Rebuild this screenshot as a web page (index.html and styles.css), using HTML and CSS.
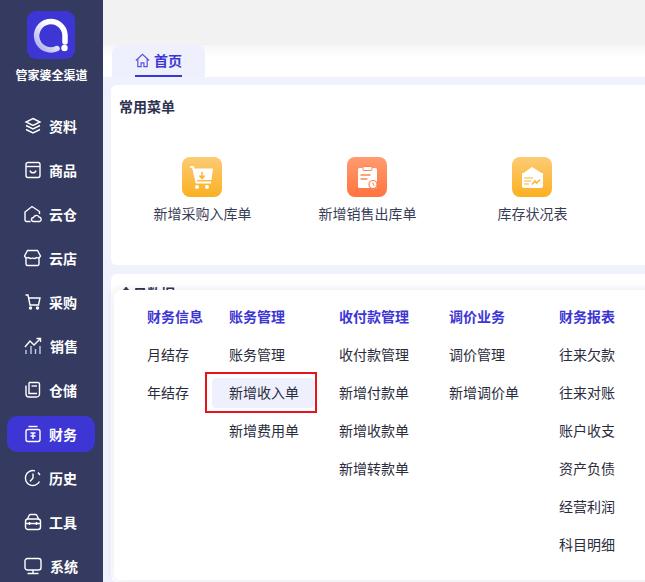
FILE: index.html
```html
<!DOCTYPE html>
<html lang="zh">
<head>
    <meta charset="UTF-8">
    <title>管家婆全渠道</title>
    <link rel="stylesheet" href="styles.css">
</head>
<body>
    <div class="app">
        <!-- 左侧导航 -->
        <aside class="sidebar">
            <div class="logo">
                <svg viewBox="0 0 48 48" width="48" height="48">
                    <defs>
                        <linearGradient id="ring" x1="1" y1="0" x2="0" y2="1">
                            <stop offset="0.35" stop-color="#fff"/>
                            <stop offset="1" stop-color="#aaa8ea"/>
                        </linearGradient>
                    </defs>
                    <rect width="48" height="48" rx="9" fill="#3d36d4"/>
                    <path d="M38 31V24A14.200 14.200 0 1 0 30 37.500" fill="none" stroke="url(#ring)" stroke-width="5.500" stroke-linecap="round"/>
                    <circle cx="37.500" cy="37" r="3.200" fill="#fff"/>
                </svg>
            </div>
            <div class="brand">管家婆全渠道</div>
            <nav class="nav">
                <a class="nav-item">
                    <svg viewBox="0 0 18 18"><path d="M9 1.500 16 5 9 8.500 2 5Z"/><path d="M2 8.500 9 12l7-3.500"/><path d="M2 12.500 9 16l7-3.500"/></svg>
                    <span>资料</span>
                </a>
                <a class="nav-item">
                    <svg viewBox="0 0 18 18"><rect x="2" y="1.500" width="14" height="15" rx="2"/><path d="M2 5.500h14"/><path d="M6 9.500c.6 3 5.400 3 6 0"/></svg>
                    <span>商品</span>
                </a>
                <a class="nav-item mid">
                    <svg viewBox="0 0 18 18"><path d="M7 16.500H3a1.500 1.500 0 0 1-1.500-1.500V7L8.500 1.500 16 6.500v2.500"/><path d="M10 16.500a2 2 0 0 1 0-4 3 3 0 0 1 5.500-.5 2.300 2.300 0 0 1 .5 4.500Z"/></svg>
                    <span>云仓</span>
                </a>
                <a class="nav-item mid">
                    <svg viewBox="0 0 18 18"><path d="M4 1.500h10l3 5.500a2.700 2.700 0 0 1-4 1.500 3.500 3.500 0 0 1-4 .5 3.500 3.500 0 0 1-4-.5 2.700 2.700 0 0 1-4-1.500Z"/><path d="M2.500 9v6a1.500 1.500 0 0 0 1.500 1.500h10a1.500 1.500 0 0 0 1.500-1.500V9"/></svg>
                    <span>云店</span>
                </a>
                <a class="nav-item">
                    <svg viewBox="0 0 18 18"><path d="M1.500 2h2.500l2 10h8.500l1.500-7H4.500"/><circle cx="6.500" cy="15" r="1"/><circle cx="13.500" cy="15" r="1"/></svg>
                    <span>采购</span>
                </a>
                <a class="nav-item wide">
                    <svg viewBox="0 0 18 18"><path d="M1 10 6 4l4 4 6-6"/><path d="M12.500 1.500H16.500V5"/><path class="bar" d="M2 13v4M7 9v8M11.500 12v5M16 9v8"/></svg>
                    <span>销售</span>
                </a>
                <a class="nav-item">
                    <svg viewBox="0 0 18 18"><path d="M5 1.500h9a1.500 1.500 0 0 1 1.500 1.500v10a3 3 0 0 1-3 3H5a3 3 0 0 1-3-3V4.500"/><path d="M5 1.500v11h8"/><path d="M7.500 5h5.500"/></svg>
                    <span>仓储</span>
                </a>
                <a class="nav-item active">
                    <svg viewBox="0 0 18 18"><rect x="2" y="4.500" width="14" height="12" rx="2"/><path d="M4.500 1.500h9"/><path d="M6.500 8h5M6.500 11h5M9 8v6"/></svg>
                    <span>财务</span>
                </a>
                <a class="nav-item">
                    <svg viewBox="0 0 18 18"><path d="M15.500 12.500A7.500 7.500 0 1 1 11 1.800"/><path d="M9 4.500V9l-3 3.500"/><path d="M14 3.500l2 2.500"/></svg>
                    <span>历史</span>
                </a>
                <a class="nav-item">
                    <svg viewBox="0 0 18 18"><rect x="1.500" y="6" width="15" height="10.500" rx="2.500"/><path d="M3.500 6 5 2.500a1.500 1.500 0 0 1 1.400-1h5.200a1.500 1.500 0 0 1 1.400 1L14.500 6"/><path d="M1.500 10.500h15M5.500 9v3M12.500 9v3"/></svg>
                    <span>工具</span>
                </a>
                <a class="nav-item wide">
                    <svg viewBox="0 0 18 18"><rect x="1" y="1.500" width="16" height="11.500" rx="2.500"/><path d="M9 13v3M3.500 16.500h11"/></svg>
                    <span>系统</span>
                </a>
            </nav>
        </aside>

        <main class="main">
            <div class="topbar"></div>
            <div class="tabs">
                <div class="tab">
                    <div class="tab-inner">
                        <svg viewBox="0 0 16 16" width="15" height="15"><path d="M1 8 8 1.500 15 8"/><path d="M3 6.500V14.500H6.500V10.500H9.500V14.500H13V6.500"/></svg>
                        <span>首页</span>
                    </div>
                </div>
            </div>

            <div class="content">
                <section class="card card-menu">
                    <h3>常用菜单</h3>
                    <div class="shortcuts">
                        <div class="shortcut">
                            <div class="shortcut-icon yellow">
                                <svg viewBox="0 0 40 40"><path d="M8 10h3l3.500 15.500H29" fill="none" stroke="#fff" stroke-width="2"/><path d="M11.500 11.500H31l-1.500 11.500H14Z" fill="#fff"/><path d="M20 15v6M17.500 18.500l2.500 3 2.500-3" fill="none" stroke="#fbb32e" stroke-width="1.500"/><circle cx="15" cy="30" r="2" fill="#fff"/><circle cx="25" cy="30" r="2" fill="#fff"/></svg>
                            </div>
                            <span>新增采购入库单</span>
                        </div>
                        <div class="shortcut">
                            <div class="shortcut-icon orange">
                                <svg viewBox="0 0 40 40"><path d="M12.500 11h16a1.500 1.500 0 0 1 1.500 1.500V29.500a1.500 1.500 0 0 1-1.500 1.500h-16a1.500 1.500 0 0 1-1.500-1.500v-17A1.500 1.500 0 0 1 12.500 11Z" fill="#fff"/><rect x="16" y="9.500" width="9" height="4" rx="1" fill="#fff" stroke="#ff8250"/><path d="M13.500 18h10M13.500 22h7" stroke="#ff8250" stroke-width="1.600"/><circle cx="26" cy="27.500" r="4" fill="#fff" stroke="#ff7f4d" stroke-width="1.200"/><path d="M26 25.500v2l1.500 1" stroke="#ff7f4d" fill="none"/></svg>
                            </div>
                            <span>新增销售出库单</span>
                        </div>
                        <div class="shortcut">
                            <div class="shortcut-icon yellow">
                                <svg viewBox="0 0 40 40"><path d="M20 10l9.500 6H31v13a2 2 0 0 1-2 2H12a2 2 0 0 1-2-2V16h1.500Z" fill="#fff"/><path d="M12 21h9M12 24h7M12 27h5" stroke="#fbb32e" stroke-width="1.200"/><path d="M20 27.500l3-3.500 1.500 2 3.500-3.500" stroke="#fbb32e" stroke-width="1.500" fill="none"/></svg>
                            </div>
                            <span>库存状况表</span>
                        </div>
                    </div>
                </section>
                <section class="card card-data">
                    <h3>今日数据</h3>
                </section>
            </div>

            <!-- 财务弹出菜单 -->
            <div class="flyout">
                <div class="flyout-col">
                    <h4>财务信息</h4>
                    <a>月结存</a>
                    <a>年结存</a>
                </div>
                <div class="flyout-col">
                    <h4>账务管理</h4>
                    <a>账务管理</a>
                    <a class="current">新增收入单</a>
                    <a>新增费用单</a>
                </div>
                <div class="flyout-col">
                    <h4>收付款管理</h4>
                    <a>收付款管理</a>
                    <a>新增付款单</a>
                    <a>新增收款单</a>
                    <a>新增转款单</a>
                </div>
                <div class="flyout-col">
                    <h4>调价业务</h4>
                    <a>调价管理</a>
                    <a>新增调价单</a>
                </div>
                <div class="flyout-col">
                    <h4>财务报表</h4>
                    <a>往来欠款</a>
                    <a>往来对账</a>
                    <a>账户收支</a>
                    <a>资产负债</a>
                    <a>经营利润</a>
                    <a>科目明细</a>
                </div>
            </div>
        </main>
    </div>
</body>
</html>
```

FILE: styles.css
```css
* {
    box-sizing: border-box;
}
html, body {
    height: 100%;
    margin: 0;
    overflow: hidden;
}
body {
    font-family: "Liberation Sans", "Noto Sans CJK SC", sans-serif;
    font-size: 14px;
    background: #fff;
}
.app {
    display: flex;
    height: 582px;
}

/* 左侧导航 */
.sidebar {
    width: 103px;
    flex: none;
    background: #343a60;
    color: #fff;
    padding-top: 11px;
    overflow: hidden;
}
.logo {
    display: flex;
    justify-content: center;
    height: 48px;
    padding-right: 1px;
}
.brand {
    margin-top: 8px;
    text-align: center;
    font-size: 12px;
    font-weight: 700;
    line-height: 18px;
}
.nav {
    margin-top: 23px;
    display: flex;
    flex-direction: column;
    gap: 8px;
    padding: 0 8px 0 7px;
}
.nav-item {
    display: flex;
    align-items: center;
    gap: 7px;
    height: 36px;
    padding-left: 17px;
    border-radius: 10px;
    font-weight: 700;
}
.nav-item svg {
    width: 18px;
    height: 18px;
    fill: none;
    stroke: #fff;
    stroke-width: 1.400;
    flex: none;
}
.nav-item.mid svg {
    width: 19px;
    margin-left: -1px;
}
.nav-item.wide svg {
    width: 20px;
    margin-left: -1px;
}
.nav-item .bar {
    stroke: #b8d2e6;
}
.nav-item.active {
    background: #3d36d4;
}

/* 主区域 */
.main {
    flex: 1;
    min-width: 0;
    display: flex;
    flex-direction: column;
    position: relative;
    background: #eff1fd;
}
.topbar {
    height: 45px;
    flex: none;
    background: #f2f2f3;
}
.tabs {
    height: 32px;
    flex: none;
    padding-left: 9px;
    background: linear-gradient(to bottom, #f6f6f7, #fff 12px);
}
.tab {
    width: 93px;
    height: 32px;
    padding-left: 23px;
    background: #eef0fd;
    border-radius: 8px 8px 0 0;
}
.tab-inner {
    display: inline-flex;
    align-items: center;
    gap: 4px;
    height: 32px;
    color: #3d36d4;
    font-weight: 700;
    border-bottom: 2px solid #3d36d4;
}
.tab-inner svg {
    fill: none;
    stroke: #5a55d8;
    stroke-width: 1.300;
}
.content {
    flex: 1;
    display: flex;
    flex-direction: column;
    gap: 9px;
    padding: 8px 0 0 8px;
}
.card {
    background: #fff;
    border-radius: 6px 0 0 6px;
    padding: 12px 9px;
}
.card h3 {
    margin: 0 0 0 -1px;
    font-size: 14px;
    line-height: 20px;
    font-weight: 700;
    color: #2e3250;
}
.card-menu {
    height: 180px;
}
.card-data {
    flex: 1;
    padding-top: 10px;
}
.shortcuts {
    display: grid;
    grid-template-columns: repeat(3, 165px);
    margin-top: 40px;
}
.shortcut {
    display: flex;
    flex-direction: column;
    align-items: center;
    color: #3a3d56;
}
.shortcut span {
    margin-top: 7px;
    line-height: 20px;
    white-space: nowrap;
}
.shortcut-icon {
    width: 40px;
    height: 40px;
    margin-left: -1px;
    border-radius: 8px;
}
.shortcut-icon svg {
    display: block;
    width: 40px;
    height: 40px;
}
.shortcut-icon.yellow {
    background: linear-gradient(to bottom, #fdcb74, #fbb021);
}
.shortcut-icon.orange {
    background: linear-gradient(to bottom, #ff9c70, #ff733f);
}

/* 弹出菜单 */
.flyout {
    position: absolute;
    left: 11px;
    top: 290px;
    width: 560px;
    height: 290px;
    display: grid;
    grid-template-columns: 74px repeat(4, 102px);
    column-gap: 8px;
    align-items: start;
    padding: 12px 0 0 16px;
    background: #fff;
    border-radius: 6px;
    box-shadow: 0 0 8px rgba(50, 50, 100, 0.12);
}
.flyout-col {
    display: flex;
    flex-direction: column;
    gap: 8px;
}
.flyout-col h4,
.flyout-col a {
    height: 30px;
    line-height: 30px;
    margin: 0;
    padding-left: 17px;
    font-size: 14px;
    white-space: nowrap;
}
.flyout-col h4 {
    color: #3d36d4;
    font-weight: 700;
}
.flyout-col a {
    color: #2a2c3c;
}
.flyout-col a.current {
    position: relative;
    background: #eef0fd;
    border-radius: 4px;
}
/* 红框 */
.flyout-col a.current::after {
    content: "";
    position: absolute;
    left: -7px;
    right: -3px;
    top: -6px;
    bottom: -5px;
    border: 2px solid #e8141c;
}
```
